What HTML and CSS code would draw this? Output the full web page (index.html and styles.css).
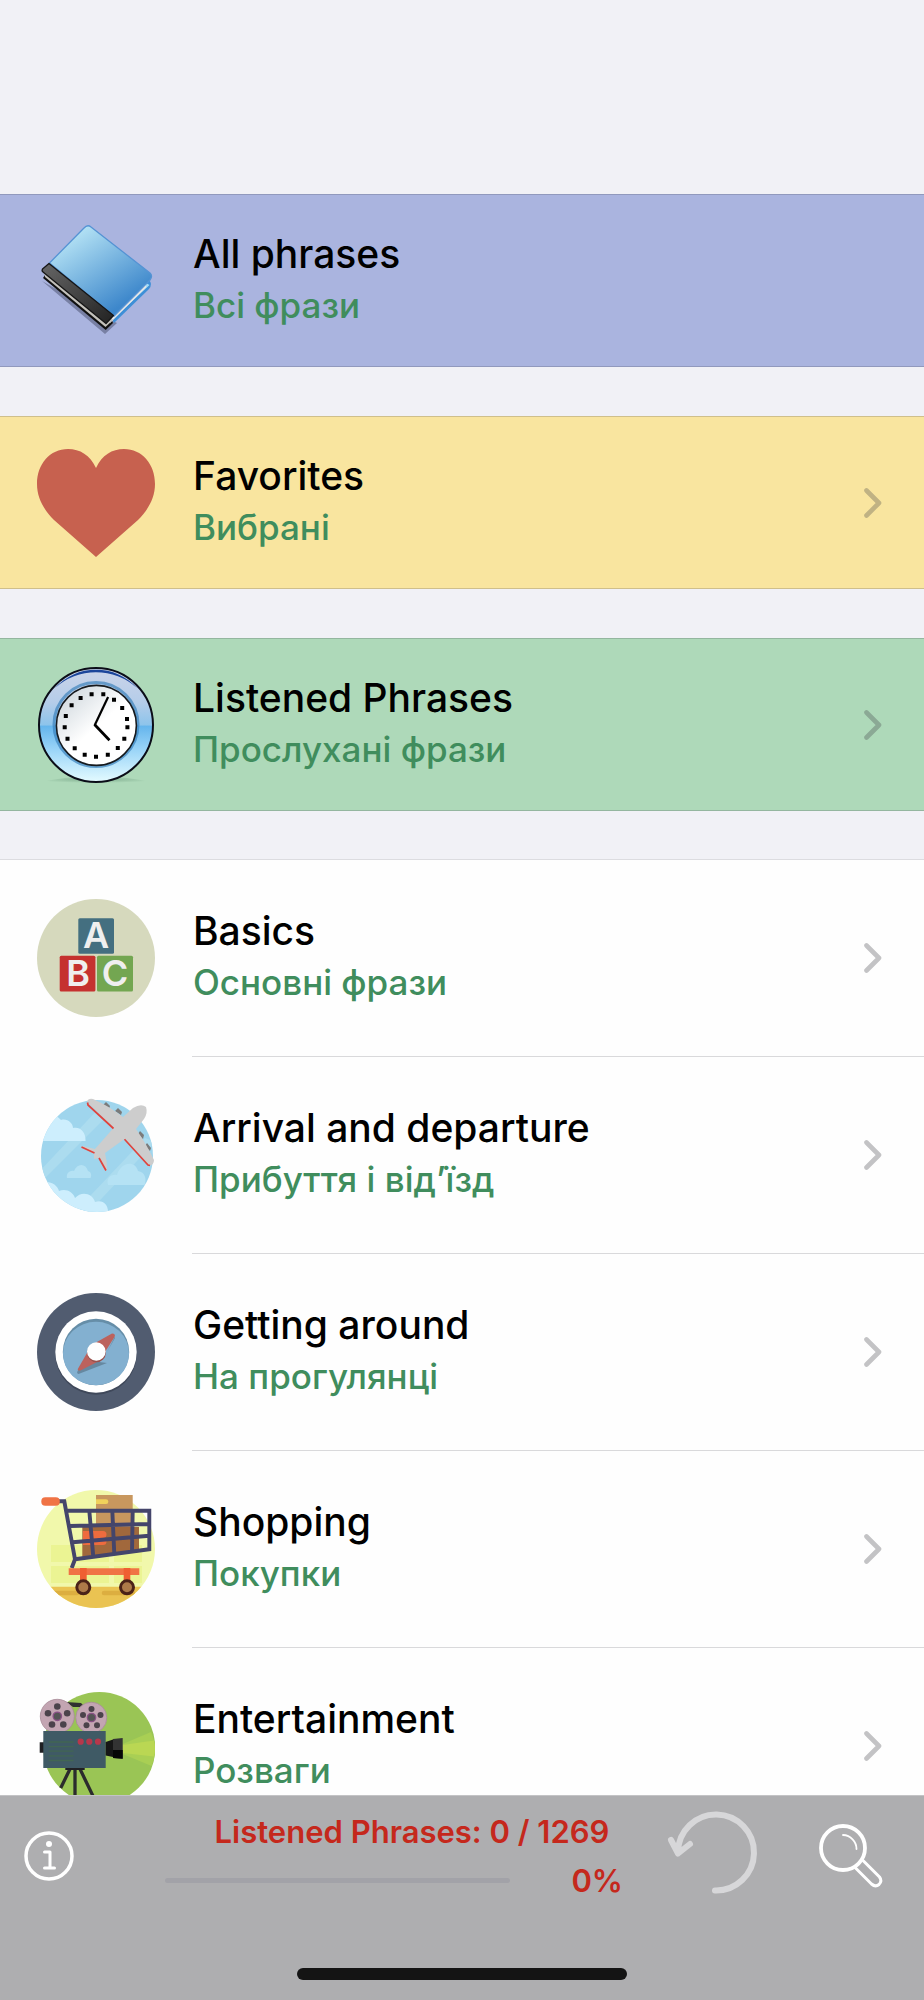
FILE: index.html
```html
<!DOCTYPE html>
<html lang="en">
<head>
<meta charset="utf-8">
<meta name="viewport" content="width=device-width, initial-scale=1">
<title>Phrasebook</title>
<link rel="stylesheet" href="styles.css">
</head>
<body>
<svg class="sprite" aria-hidden="true">
  <symbol id="chevron" viewBox="0 0 18 30"><path d="M2.5 2.5 15 15 2.5 27.5" fill="none" stroke="currentColor" stroke-width="4.6" stroke-linecap="round" stroke-linejoin="round"/></symbol>
</svg>
<main class="screen">
  <nav class="menu" aria-label="Phrases">
    <a class="row card blue" href="#all">
      <svg class="icon" viewBox="0 0 118 118" aria-hidden="true">
        <defs><linearGradient id="cover" x1="0.2" y1="0.1" x2="0.75" y2="0.85"><stop offset="0" stop-color="#b5e3f5"/><stop offset="1" stop-color="#3d87cb"/></linearGradient>
        <linearGradient id="spine" x1="0" y1="0" x2="1" y2="1"><stop offset="0" stop-color="#666"/><stop offset="1" stop-color="#222"/></linearGradient></defs>
        <path d="M5 59 68 112 80 101 70 96Z" fill="#7880a4"/>
        <path d="M6 56 68.700 108 76 101 73 95 10 50Z" fill="#111"/>
        <path d="M112 58Q116 62 112 67L77 101 74 94Z" fill="#3e8fd7"/>
        <path d="M109 61 112.500 63 76 97 74 93Z" fill="#a5ddf7"/>
        <path d="M107 61 109.500 65 73 101 70 96Z" fill="#e6e6e6"/>
        <path d="M7 50 8 55 68.500 105 76 98 73 94Z" fill="#c3c1bb"/>
        <path d="M12.500 41 47 6Q50.500 2 54 5L113 51Q116 54 113 58L77 94Z" fill="url(#cover)" stroke="#5593d4" stroke-width="1.300"/>
        <path d="M12 41.500 5.500 47Q4.500 49 6 50L69 101.500 76.500 93.500Z" fill="url(#spine)" stroke="#151515" stroke-width="1.300" stroke-linejoin="round"/>
      </svg>
      <span class="labels"><span class="title">All phrases</span><span class="subtitle" lang="uk">Всі фрази</span></span>
    </a>
    <a class="row card yellow" href="#favorites">
      <svg class="icon" viewBox="0 0 118 118" aria-hidden="true"><path d="M59 24C53 11 43 5 31 5 13 5 0 20 0 40 0 54 7 66 17 76L59 113 101 76C111 66 118 54 118 40 118 20 105 5 87 5 75 5 65 11 59 24Z" fill="#c7614f"/></svg>
      <span class="labels"><span class="title">Favorites</span><span class="subtitle" lang="uk">Вибрані</span></span>
      <svg class="chevron" aria-hidden="true"><use href="#chevron"/></svg>
    </a>
    <a class="row card green" href="#listened">
      <svg class="icon" viewBox="0 0 118 118" aria-hidden="true">
        <defs><linearGradient id="rim" x1="0" y1="0" x2="0" y2="1"><stop offset="0.030" stop-color="#c9d3e9"/><stop offset="0.300" stop-color="#b5cde9"/><stop offset="0.500" stop-color="#8dc4eb"/><stop offset="0.510" stop-color="#65b5ec"/><stop offset="0.720" stop-color="#9bd5f8"/><stop offset="1" stop-color="#e4fbff"/></linearGradient>
        <linearGradient id="face" x1="0" y1="0" x2="0.800" y2="0.900"><stop offset="0.100" stop-color="#cfd7dd"/><stop offset="0.600" stop-color="#fff"/></linearGradient>
        <radialGradient id="shade"><stop offset="0" stop-color="#548568" stop-opacity=".5"/><stop offset="1" stop-color="#548568" stop-opacity="0"/></radialGradient></defs>
        <path d="M0 117Q59 103 118 117Z" fill="url(#shade)"/>
        <circle cx="59" cy="59" r="57" fill="url(#rim)" stroke="#0b0d18" stroke-width="2"/>
        <path d="M18 22A55 55 0 0 1 100 22 61 61 0 0 0 18 22Z" fill="#1b459b"/>
        <circle cx="59" cy="58.500" r="42" fill="none" stroke="#347cb9" stroke-width="3" opacity=".65"/>
        <circle cx="59.400" cy="59.400" r="40" fill="url(#face)" stroke="#15191d" stroke-width="1.600"/>
        <path d="M54.600 28.300h.01M66.300 28.300h.01M77 33.700h.01M85.200 42h.01M90 53h.01M90.400 61.300h.01M87.300 72.700h.01M80.800 82h.01M70.800 88.700h.01M59 90.700h.01M47.700 88.700h.01M37.700 82.300h.01M30.500 72.700h.01M27.700 61.300h.01M28.800 50h.01M34.600 39.300h.01M43.600 32h.01" stroke="#000" stroke-width="4" stroke-linecap="square"/>
        <path d="M71.100 31 57.700 59.300" stroke="#000" stroke-width="2.200"/><path d="M57.500 58.500 72.500 74.300" stroke="#000" stroke-width="2.800"/>
      </svg>
      <span class="labels"><span class="title">Listened Phrases</span><span class="subtitle" lang="uk">Прослухані фрази</span></span>
      <svg class="chevron" aria-hidden="true"><use href="#chevron"/></svg>
    </a>
    <ul class="topics">
      <li><a class="row" href="#basics">
        <svg class="icon" viewBox="0 0 118 118" aria-hidden="true">
          <circle cx="59" cy="59" r="59" fill="#d6d9bd"/>
          <rect x="41.300" y="19.300" width="35.700" height="35.400" rx="1.500" fill="#446f80"/><rect x="22.700" y="56.700" width="35.700" height="35.700" rx="1.500" fill="#c5312f"/><rect x="60" y="56.700" width="36" height="35.700" rx="1.500" fill="#73a651"/>
          <g class="block-letter"><text x="59.200" y="49">A</text><text x="41" y="86.500">B</text><text x="78" y="86.500">C</text></g>
        </svg>
        <span class="labels"><span class="title">Basics</span><span class="subtitle" lang="uk">Основні фрази</span></span>
        <svg class="chevron" aria-hidden="true"><use href="#chevron"/></svg></a></li>
      <li><a class="row" href="#arrival">
        <svg class="icon" viewBox="0 0 118 118" aria-hidden="true">
          <defs><clipPath id="sky"><circle cx="60" cy="60" r="56"/></clipPath></defs>
          <g clip-path="url(#sky)"><path d="M0 0h118v118H0z" fill="#9fd5ed"/>
            <path d="M0 78 66 8 76 14 0 90ZM36 118 108 42 118 46 50 118Z" fill="#acdcef"/>
            <path d="M0 45V25C8 17 18 17 24 24 30 22 36 27 36 32 44 30 49 37 48.500 45ZM0 118V90C8 82 20 87 22 95 29 92 36 96 38 102 45 94 56 98 58 106 66 103 72 109 71 118Z" fill="#cdeefd"/>
            <path d="M30 82C29 77 33 74 37 75 40 67 49 67 51 75 54 76 55 79 53.500 82ZM71 89C69 82 74 78 80 79 84 66 98 64 101 75 108 76 110 83 107.500 89Z" fill="#b5e2f4"/>
          </g>
          <path d="M66 9 69 6 73 10 72 13ZM78 15 81 12 85 16 84 19ZM101 38 103 35 107 39 106 43ZM108 50 110 47 114 52 113 55Z" fill="#7b7b7b"/>
          <path d="M50 6Q51 2 56 3 72 10 86 21L96 12Q104 7 109 11 111 17 107 23L99 33Q110 49 117 64 117 69 112 70L87.500 43 68 57Q70 65 70 73L69 75 62 62 57 63 57 58 44.500 51 46 50 58 53 76.500 32Z" fill="#cdcdcd"/>
          <path d="M50.500 6.500 51 9 76.500 32.500M87.500 43.300 111 69 113 69.500M44.500 51 57.500 57M62 62 69 74.500" fill="none" stroke="#e0433d" stroke-width="1.700"/>
        </svg>
        <span class="labels"><span class="title">Arrival and departure</span><span class="subtitle" lang="uk">Прибуття і від’їзд</span></span>
        <svg class="chevron" aria-hidden="true"><use href="#chevron"/></svg></a></li>
      <li><a class="row" href="#around">
        <svg class="icon" viewBox="0 0 118 118" aria-hidden="true">
          <circle cx="59" cy="59" r="59" fill="#515c70"/><circle cx="59" cy="61" r="40.700" fill="#3f485a"/><circle cx="59" cy="59" r="40.700" fill="#fff"/><circle cx="59" cy="59" r="33.200" fill="#668ea8"/><ellipse cx="59" cy="60.500" rx="33" ry="31.700" fill="#83b0d0"/>
          <path d="M41 77.500 47 67 70 70 41.500 81Q39 80 41 77.500ZM78 43.500 78 45 70 59Z" fill="#6688a0"/>
          <path d="M40.800 76 50 60 58 50 75 40.500Q79 40.500 77.500 44L68 59 60 69 43.500 77.500Q40 78 40.800 76Z" fill="#bc625d"/>
          <circle cx="59.500" cy="60" r="9.300" fill="#9a514d"/><circle cx="59.300" cy="58.500" r="9.300" fill="#fff"/>
        </svg>
        <span class="labels"><span class="title">Getting around</span><span class="subtitle" lang="uk">На прогулянці</span></span>
        <svg class="chevron" aria-hidden="true"><use href="#chevron"/></svg></a></li>
      <li><a class="row" href="#shopping">
        <svg class="icon" viewBox="0 0 118 118" aria-hidden="true">
          <defs><clipPath id="disc"><circle cx="59" cy="59" r="59"/></clipPath></defs>
          <g clip-path="url(#disc)"><path d="M0 0h118v118H0z" fill="#f1f8ab"/><path d="M14 55h58v17H14zM77 55h28v17H77zM14 76h58v17H14zM77 76h28v17H77z" fill="#ebf493"/><path d="M0 96.700h118V118H0z" fill="#eac352"/><path d="M14 103H40M67 103H96" stroke="#dcae40" stroke-width="4.500" stroke-linecap="round"/></g>
          <path d="M59 5H95.700V37H59Z" fill="#c8975e"/><path d="M59 9.300H69a2.300 2.300 0 0 1 0 4.700H59Z" fill="#f1d15b"/>
          <path d="M45.300 37H102V62L45.300 67Z" fill="#a1683c"/><path d="M46 41H66a2 2 0 0 1 0 7 3.500 3.500 0 0 1 0 7H46Z" fill="#ee6b3e"/>
          <path d="M22 11.300H27.300L38 69.300 34.700 78M29.700 20.700H112.300V59.300L38 69.300M33 36 112.300 34M35.700 52.300 112.300 45.700M52.300 20.700 56.300 67M75.300 20.700 77.300 64M95.700 20.700 95 62" fill="none" stroke="#44456b" stroke-width="3.900"/>
          <rect x="4.300" y="7.300" width="18.500" height="8.400" rx="4" fill="#f07345"/><path d="M31.700 78.300H102.300V85H31.700Z" fill="#f07345"/><path d="M43 78H49.700V92H43ZM86.700 78H93.300V92H86.700Z" fill="#ef5f32"/>
          <g fill="#ad7a49" stroke="#4b2218" stroke-width="3"><circle cx="46.300" cy="97.300" r="6.500"/><circle cx="90" cy="97.300" r="6.500"/></g>
        </svg>
        <span class="labels"><span class="title">Shopping</span><span class="subtitle" lang="uk">Покупки</span></span>
        <svg class="chevron" aria-hidden="true"><use href="#chevron"/></svg></a></li>
      <li><a class="row" href="#entertainment">
        <svg class="icon" viewBox="0 0 118 118" aria-hidden="true">
          <circle cx="62.300" cy="61" r="56" fill="#9ac555"/><path d="M85.700 57 114 45Q122 62 114.500 79L85.700 67Z" fill="#a9cf54"/><path d="M85.700 58 117 53.500Q119 61 117 69.500L85.700 66Z" fill="#bad753"/>
          <path d="M29 15 44 16 48 20 36 20Z" fill="#313131"/>
          <path d="M33 82 23.700 101M38 82V109M43 82 56 109" stroke="#2b2b2d" stroke-width="3.300"/><path d="M28.300 80H47.700V83H28.300ZM2.700 55.300H8V65.700H2.700Z" fill="#202023"/>
          <g fill="#c3a5b2" stroke="#a88b98" stroke-width=".8"><circle cx="20.300" cy="29.300" r="17"/><circle cx="54.300" cy="30.700" r="15.500"/></g>
          <g fill="#4b434b"><circle cx="20.300" cy="19.500" r="3.300"/><circle cx="30.200" cy="26.300" r="3.300"/><circle cx="26.300" cy="37.500" r="3.300"/><circle cx="15" cy="37.500" r="3.300"/><circle cx="11" cy="26.300" r="3.300"/><circle cx="54.500" cy="22" r="3"/><circle cx="63.500" cy="28" r="3"/><circle cx="60" cy="38.300" r="3"/><circle cx="49.500" cy="38.300" r="3"/><circle cx="46" cy="28" r="3"/></g>
          <g fill="#555" stroke="#8a5286" stroke-width="1.300"><circle cx="20.300" cy="29.300" r="4.200"/><circle cx="54.500" cy="30.500" r="4.200"/></g>
          <rect x="6.300" y="44" width="62.400" height="37" fill="#3f5a65"/><path d="M11.700 55H36.500M11.700 59.700H36.500M11.700 64.200H36.500M11.700 68.800H36.500M11.700 73.500H36.500" stroke="#426653" stroke-width="1.300"/>
          <g fill="#b7374b"><circle cx="43.700" cy="54.700" r="3.100"/><circle cx="52.300" cy="54.700" r="3.100"/><circle cx="61" cy="54.700" r="3.100"/></g>
          <path d="M68.700 55 76 52.500V70L68.700 68.500Z" fill="#161616"/><path d="M76 52 85.700 51V71.700L76 71Z" fill="#333"/><path d="M76 63H85.700V71.700L76 71Z" fill="#070707"/>
        </svg>
        <span class="labels"><span class="title">Entertainment</span><span class="subtitle" lang="uk">Розваги</span></span>
        <svg class="chevron" aria-hidden="true"><use href="#chevron"/></svg></a></li>
    </ul>
  </nav>
</main>
<footer class="toolbar">
  <div class="controls">
    <button class="tool" type="button" aria-label="Information"><svg class="info" viewBox="0 0 50 50" fill="none" stroke="#fff" stroke-linecap="round" stroke-linejoin="round"><circle cx="25" cy="25" r="23" stroke-width="3.500"/><path d="M20.500 21H26V37M20.500 37H30.500" stroke-width="3"/><circle cx="25" cy="13" r="3" fill="#fff" stroke="none"/></svg></button>
    <div class="status">
      <label class="count" for="progress">Listened Phrases: 0 / 1269</label>
      <div class="meter"><progress class="progress" id="progress" max="1269" value="0"></progress><span class="percent">0%</span></div>
    </div>
    <button class="tool" type="button" aria-label="Reset"><svg class="reset" viewBox="0 0 88 88" fill="none" stroke="#d7d7d9" stroke-width="6" stroke-linecap="round" stroke-linejoin="round"><path d="M47 78.500A38 38 0 1 0 10 40M3 28 10 41.500 22 32"/></svg></button>
    <button class="tool" type="button" aria-label="Search"><svg class="search" viewBox="0 0 64 64" fill="none" stroke="#fff"><circle cx="24" cy="24" r="22" stroke-width="3.800"/><path d="M24 11A14 14 0 0 1 37.500 25" stroke-width="1.800" stroke-linecap="round"/><path d="M36 43.500 52.500 60Q56.500 63.500 60 60.500 63.500 57 60.500 53L43.500 36" stroke-width="3"/></svg></button>
  </div>
  <div class="home-indicator"></div>
</footer>
</body>
</html>
```
FILE: styles.css
```css
* { box-sizing: border-box; }

body {
  margin: 0;
  height: 100vh;
  display: flex;
  flex-direction: column;
  background: #f1f1f6;
  color: #000;
  font-family: Inter, "Noto Sans", sans-serif;
}

.sprite { display: none; }

.screen {
  flex: 1;
  min-height: 0;
  padding-top: 194px;
  overflow-y: auto;
  scrollbar-width: none;
}

.menu {
  display: flex;
  flex-direction: column;
  gap: 49px;
}

.row {
  display: flex;
  align-items: center;
  gap: 38px;
  padding-left: 37px;
  color: inherit;
  text-decoration: none;
}

.card {
  padding-top: 27px;
  padding-bottom: 26px;
  border-top: 1px solid rgb(60 60 67 / 22%);
  border-bottom: 1px solid rgb(60 60 67 / 22%);
}

.blue { background: #aab4df; }
.yellow { background: #f9e59f; }
.green { background: #aed9b9; }

.icon {
  flex: none;
  width: 118px;
  height: 118px;
}

.labels {
  flex: 1;
  display: flex;
  flex-direction: column;
  padding-bottom: 4px;
}

.title {
  font-size: 39px;
  font-weight: 500;
  line-height: 52px;
}

.subtitle {
  color: #408d5d;
  font-size: 35px;
  font-weight: 500;
  line-height: 50px;
}

.chevron {
  flex: none;
  width: 18px;
  height: 30px;
  margin-right: 42px;
  color: rgb(60 60 67 / 30%);
}

.block-letter {
  fill: #efefef;
  font-size: 36px;
  font-weight: 600;
  text-anchor: middle;
}

.topics {
  margin: 0;
  padding: 0;
  list-style: none;
  background: #fefefe;
  box-shadow: 0 -1px #dcdce0;
}

.topics .row {
  padding-top: 39px;
  padding-bottom: 39px;
}

.topics li {
  border-bottom: 1px solid;
  border-image: linear-gradient(to right, transparent 193px, #d9d9db 193px) 1;
}

.toolbar {
  flex: none;
  display: flex;
  flex-direction: column;
  align-items: center;
  gap: 68px;
  padding: 16px 0 20px;
  background: #aeaeb0;
  border-top: 1px solid #c3c3c5;
}

.controls {
  align-self: stretch;
  display: flex;
  align-items: center;
  padding: 0 41px 0 24px;
}

.tool {
  padding: 0;
  border: 0;
  background: none;
  cursor: pointer;
}

.tool svg { display: block; overflow: visible; }
.info { width: 50px; height: 50px; }
.reset { width: 88px; height: 88px; }
.search { width: 64px; height: 64px; margin-left: 63px; }

.status {
  flex: 1;
  display: flex;
  flex-direction: column;
  gap: 13px;
  margin: 0 9px 0 91px;
  color: #c5281c;
  font-size: 31px;
  font-weight: 600;
  line-height: 36px;
}

.count { text-align: center; }

.meter {
  display: flex;
  align-items: center;
  gap: 61px;
  padding-right: 36px;
}

.progress {
  flex: 1;
  min-width: 0;
  height: 5px;
  appearance: none;
  border: 0;
  border-radius: 3px;
  overflow: hidden;
  background: #a2a2a8;
}

.progress::-webkit-progress-bar { background: #a2a2a8; }
.progress::-webkit-progress-value { background: #c5281c; }

.home-indicator {
  width: 330px;
  height: 12px;
  border-radius: 6px;
  background: #141414;
}
```
